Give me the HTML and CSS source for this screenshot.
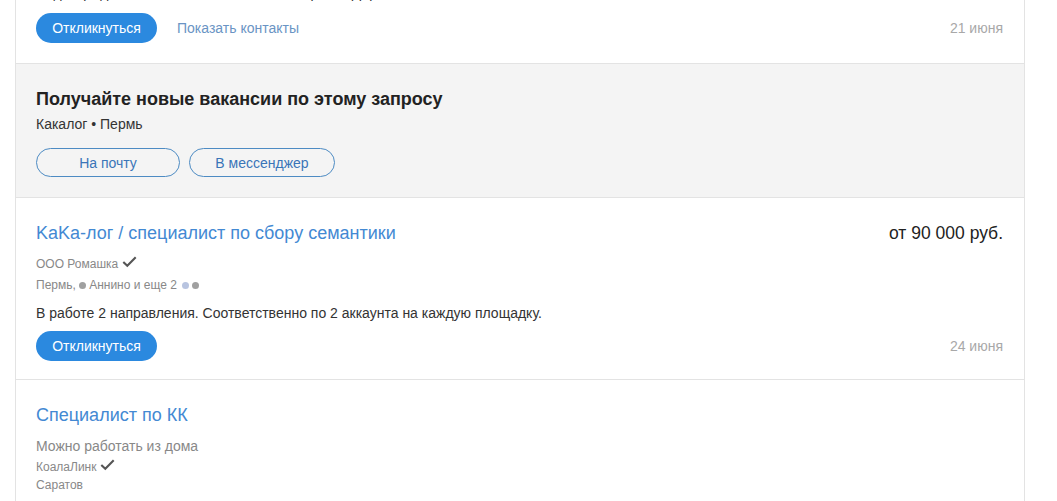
FILE: index.html
```html
<!DOCTYPE html>
<html lang="ru">
<head>
<meta charset="utf-8">
<link rel="stylesheet" href="styles.css">
</head>
<body>
<div class="list">
  <div class="card card-partial">
    <p class="desc">Подтвержденный опыт качественной настройки Директ-кампаний</p>
    <div class="actions">
      <div class="actions-left">
        <button class="btn-primary">Откликнуться</button>
        <a class="link-contacts">Показать контакты</a>
      </div>
      <span class="date">21 июня</span>
    </div>
  </div>

  <div class="subscribe">
    <h2 class="sub-title">Получайте новые вакансии по этому запросу</h2>
    <div class="sub-query">Какалог • Пермь</div>
    <div class="sub-buttons">
      <button class="btn-outline btn-mail">На почту</button>
      <button class="btn-outline btn-msg">В мессенджер</button>
    </div>
  </div>

  <div class="card card-main">
    <div class="head">
      <a class="title">KaKa-лог / специалист по сбору семантики</a>
      <span class="salary">от 90 000 руб.</span>
    </div>
    <div class="company">ООО Ромашка <svg class="check" width="15" height="12" viewBox="0 0 15 12"><path d="M1.3 6 L5.3 9.8 L13.7 1.3" fill="none" stroke="#555" stroke-width="2.1"/></svg></div>
    <div class="location">Пермь, <span class="dot dot-gray"></span>Аннино и еще 2 <span class="dot dot-blue"></span><span class="dot dot-gray"></span></div>
    <p class="desc">В работе 2 направления. Соответственно по 2 аккаунта на каждую площадку.</p>
    <div class="actions">
      <div class="actions-left">
        <button class="btn-primary">Откликнуться</button>
      </div>
      <span class="date">24 июня</span>
    </div>
  </div>

  <div class="card card-last">
    <div class="head">
      <a class="title">Специалист по КК</a>
    </div>
    <div class="remote">Можно работать из дома</div>
    <div class="company company-tight">КоалаЛинк <svg class="check" width="15" height="12" viewBox="0 0 15 12"><path d="M1.3 6 L5.3 9.8 L13.7 1.3" fill="none" stroke="#555" stroke-width="2.1"/></svg></div>
    <div class="location location-tight">Саратов</div>
  </div>
</div>
</body>
</html>
```

FILE: styles.css
```css
* { box-sizing: border-box; }

html, body {
  margin: 0;
  padding: 0;
  background: #fff;
  font-family: "Liberation Sans", Arial, sans-serif;
  color: #333;
}

body { overflow: hidden; height: 501px; }

.list {
  margin-left: 15px;
  width: 1010px;
  border-left: 1px solid #e3e3e3;
  border-right: 1px solid #e3e3e3;
}

.card {
  padding: 22px 20px 19px 20px;
  border-bottom: 1px solid #e3e3e3;
}

.card-partial {
  margin-top: -29px;
  padding-top: 0;
  padding-bottom: 20px;
}

.card-main {
  padding-top: 23px;
  padding-bottom: 18px;
}

.card-last {
  padding-top: 23px;
}

.desc {
  margin: 8px 0 0 0;
  font-size: 14px;
  line-height: 20px;
  color: #333;
}

.card-partial .desc { margin-top: 12px; }
.card-partial .actions { margin-top: 10px; }

.actions {
  display: flex;
  justify-content: space-between;
  align-items: center;
  margin-top: 8px;
}

.actions-left {
  display: flex;
  align-items: center;
  gap: 20px;
}

.btn-primary {
  height: 30px;
  padding: 0 16px;
  border: none;
  border-radius: 15px;
  background: #2b89df;
  color: #fff;
  font-family: inherit;
  font-size: 14px;
  line-height: 30px;
  width: 121px;
  text-align: center;
}

.link-contacts {
  font-size: 14px;
  color: #6a94c4;
}

.date {
  font-size: 14px;
  color: #a8a8a8;
  margin-right: 1px;
}

.subscribe {
  background: #f4f4f4;
  padding: 24px 20px 20px 20px;
  border-bottom: 1px solid #e3e3e3;
}

.sub-title {
  margin: 0;
  font-size: 18px;
  line-height: 22px;
  font-weight: bold;
  color: #222;
}

.sub-query {
  margin-top: 5px;
  font-size: 14px;
  line-height: 18px;
  color: #333;
}

.sub-buttons {
  display: flex;
  gap: 9px;
  margin-top: 15px;
}

.btn-outline {
  height: 29px;
  border: 1px solid #4d8bc3;
  border-radius: 15px;
  background: transparent;
  color: #3a75b8;
  font-family: inherit;
  font-size: 14px;
  padding: 0;
  text-align: center;
}

.btn-mail { width: 144px; }
.btn-msg { width: 146px; }

.head {
  display: flex;
  justify-content: space-between;
  align-items: center;
  height: 24px;
}

.title {
  font-size: 18px;
  line-height: 24px;
  color: #4389d3;
}

.salary {
  font-size: 17.5px;
  color: #222;
  margin-right: 1px;
}

.company {
  margin-top: 9px;
  font-size: 12px;
  line-height: 20px;
  color: #888;
  display: flex;
  align-items: center;
  gap: 4px;
}

.check { margin-top: -4px; }

.location {
  margin-top: 1px;
  font-size: 12px;
  line-height: 20px;
  color: #888;
}

.dot {
  display: inline-block;
  width: 7px;
  height: 7px;
  border-radius: 50%;
  vertical-align: 0;
  margin-right: 3px;
}

.dot-gray { background: #a0a0a0; }
.dot-blue { background: #b8c4e0; margin-left: 2px; }

.remote {
  margin-top: 9px;
  font-size: 14px;
  line-height: 20px;
  color: #888;
}

.company-tight { margin-top: 1px; }
.location-tight { margin-top: -1px; line-height: 18px; }
```
